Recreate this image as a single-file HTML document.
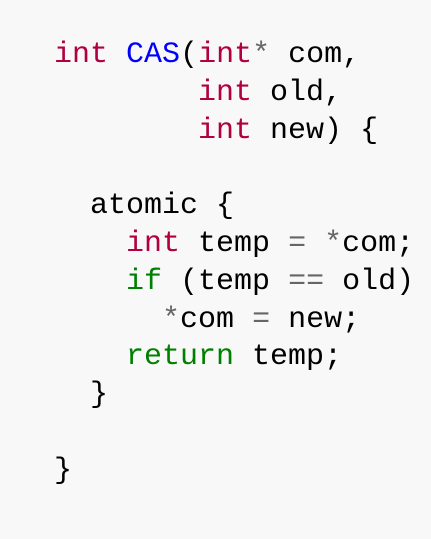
<!DOCTYPE html>
<html><head><style>
html,body{margin:0;padding:0;background:#f8f8f8;width:431px;height:539px;overflow:hidden}
pre{position:absolute;left:54px;top:37px;margin:0;font-family:"Liberation Mono",monospace;font-size:30px;line-height:37.8px;color:#000}
.k{color:#b00040}.f{color:#0000ff}.g{color:#008000}.o{color:#666}
</style></head><body>
<pre><span class="k">int</span> <span class="f">CAS</span>(<span class="k">int</span><span class="o">*</span> com,
        <span class="k">int</span> old,
        <span class="k">int</span> new) {

  atomic {
    <span class="k">int</span> temp <span class="o">=</span> <span class="o">*</span>com;
    <span class="g">if</span> (temp <span class="o">==</span> old)
      <span class="o">*</span>com <span class="o">=</span> new;
    <span class="g">return</span> temp;
  }

}</pre>
</body></html>
